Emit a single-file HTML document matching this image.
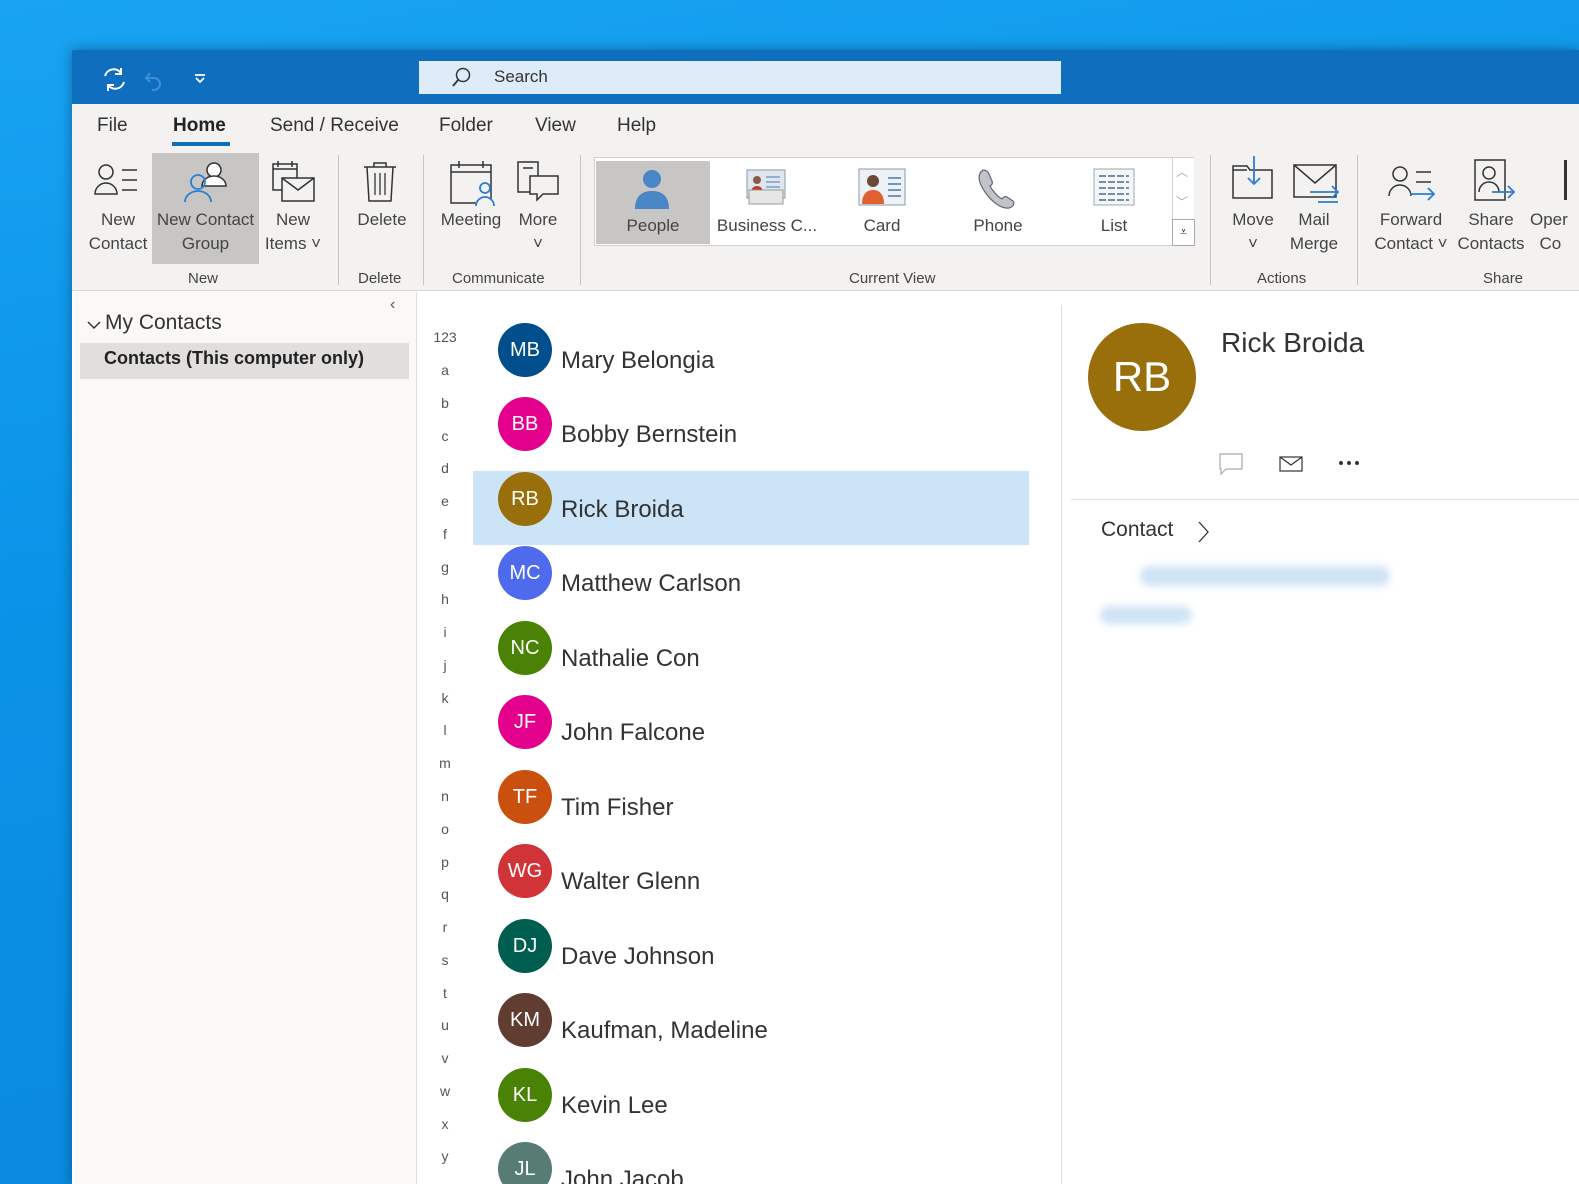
<!DOCTYPE html>
<html><head><meta charset="utf-8"><style>
*{margin:0;padding:0;box-sizing:border-box}
html,body{width:1579px;height:1184px;overflow:hidden}
body{position:relative;font-family:"Liberation Sans",sans-serif;background:linear-gradient(170deg,#19a3f2 0%,#0a93e8 40%,#0a86dc 100%)}
.a{position:absolute}
.win{left:72px;top:50px;width:1507px;height:1134px;background:#fff;box-shadow:0 0 12px rgba(0,0,0,.35)}
.title{left:72px;top:50px;width:1507px;height:54px;background:#106ebe}
.ribbon{left:72px;top:104px;width:1507px;height:187px;background:#f3f2f1;border-bottom:1px solid #d6d6d6}
.tab{top:115px;font-size:19px;color:#333}
.lbl{font-size:17px;color:#444;text-align:center;line-height:24px}
.grp{top:270px;font-size:15px;color:#444}
.sep{top:155px;width:1px;height:130px;background:#c8c6c4}
.av{width:54px;height:54px;border-radius:50%;color:#fff;font-size:20px;text-align:center;line-height:54px;left:498px}
.nm{left:561px;font-size:24px;color:#333}
.al{left:425px;width:40px;text-align:center;font-size:14px;color:#555}
</style></head><body>
<div class="a win"></div>
<div class="a title"></div>
<svg class="a" style="left:100px;top:65px" width="120" height="30" viewBox="0 0 120 30">
<path d="M5 11a9 9 0 0 1 16-3M24 17a9 9 0 0 1-16 3" stroke="#fff" stroke-width="2" fill="none"/><path d="M21 3v6h-6M8 26v-6h6" stroke="#fff" stroke-width="2" fill="none"/>
<path d="M50 8l-4 5 4 4M46 13h8a6 6 0 0 1 0 12h-2" stroke="#3f8fd6" stroke-width="2" fill="none"/>
<path d="M95 10h10M96 13l4 4 4-4" stroke="#fff" stroke-width="1.8" fill="none"/></svg>
<div class="a" style="left:419px;top:61px;width:642px;height:33px;background:#deecf9"></div>
<svg class="a" style="left:450px;top:66px" width="24" height="24"><circle cx="13" cy="9" r="6.5" stroke="#333" stroke-width="1.5" fill="none"/><path d="M8.5 13.5L3 20" stroke="#333" stroke-width="1.8"/></svg>
<div class="a" style="left:494px;top:67px;font-size:17px;color:#333">Search</div>
<div class="a ribbon"></div>
<div class="a tab" style="left:97px">File</div>
<div class="a tab" style="left:173px;font-weight:bold;color:#222">Home</div>
<div class="a" style="left:172px;top:142px;width:58px;height:4px;background:#106ebe"></div>
<div class="a tab" style="left:270px">Send / Receive</div>
<div class="a tab" style="left:439px">Folder</div>
<div class="a tab" style="left:535px">View</div>
<div class="a tab" style="left:617px">Help</div>
<div class="a" style="left:152px;top:153px;width:107px;height:111px;background:#c8c6c4"></div>
<svg class="a" style="left:92px;top:160px" width="52" height="40"><circle cx="14" cy="12" r="7" stroke="#333" stroke-width="1.5" fill="none"/><path d="M3 34a11 11 0 0 1 22 0z" stroke="#333" stroke-width="1.5" fill="none"/><path d="M30 10h15M30 20h15M30 30h15" stroke="#333" stroke-width="1.5"/></svg>
<div class="a lbl" style="left:80px;top:208px;width:76px">New<br>Contact</div>
<svg class="a" style="left:180px;top:158px" width="50" height="46"><circle cx="34" cy="12" r="7" stroke="#333" stroke-width="1.5" fill="#fff"/><path d="M22 28a12 10 0 0 1 24 0z" stroke="#333" stroke-width="1.5" fill="#fff"/><circle cx="18" cy="24" r="7" stroke="#2a7fd4" stroke-width="1.8" fill="none"/><path d="M5 44a13 11 0 0 1 26 0" stroke="#2a7fd4" stroke-width="1.8" fill="none"/></svg>
<div class="a lbl" style="left:152px;top:208px;width:107px">New Contact<br>Group</div>
<svg class="a" style="left:270px;top:160px" width="48" height="44"><rect x="3" y="4" width="24" height="26" stroke="#333" stroke-width="1.5" fill="none"/><path d="M3 9h24M8 1v6M22 1v6" stroke="#333" stroke-width="1.5"/><rect x="12" y="18" width="32" height="23" stroke="#333" stroke-width="1.5" fill="#f3f2f1"/><path d="M12 18l16 12 16-12" stroke="#333" stroke-width="1.5" fill="none"/></svg>
<div class="a lbl" style="left:256px;top:208px;width:74px">New<br>Items ˅</div>
<div class="a grp" style="left:188px">New</div>
<div class="a sep" style="left:338px"></div>
<svg class="a" style="left:362px;top:160px" width="36" height="44"><path d="M2 7h32M12 7V3h12v4" stroke="#333" stroke-width="1.5" fill="none"/><path d="M5 7l2 34h22l2-34" stroke="#333" stroke-width="1.5" fill="none"/><path d="M13 13v22M18 13v22M23 13v22" stroke="#333" stroke-width="1.3"/></svg>
<div class="a lbl" style="left:350px;top:208px;width:64px">Delete</div>
<div class="a grp" style="left:358px">Delete</div>
<div class="a sep" style="left:423px"></div>
<svg class="a" style="left:448px;top:160px" width="50" height="46"><rect x="3" y="5" width="40" height="38" stroke="#333" stroke-width="1.5" fill="none"/><path d="M3 12h40M11 1v7M35 1v7" stroke="#333" stroke-width="1.5"/><circle cx="37" cy="28" r="5" stroke="#2a7fd4" stroke-width="1.8" fill="#f3f2f1"/><path d="M28 46a9 9 0 0 1 18 0" stroke="#2a7fd4" stroke-width="1.8" fill="#f3f2f1"/></svg>
<div class="a lbl" style="left:436px;top:208px;width:70px">Meeting</div>
<svg class="a" style="left:515px;top:160px" width="46" height="46"><path d="M3 2h20v30H3z" stroke="#333" stroke-width="1.5" fill="none"/><path d="M8 8h10" stroke="#333" stroke-width="1.5"/><path d="M15 16h28v18H28l-6 6v-6h-7z" stroke="#333" stroke-width="1.5" fill="#f3f2f1"/></svg>
<div class="a lbl" style="left:510px;top:208px;width:56px">More<br>˅</div>
<div class="a grp" style="left:452px">Communicate</div>
<div class="a sep" style="left:580px"></div>
<div class="a" style="left:594px;top:157px;width:600px;height:89px;background:#fff;border:1px solid #d2d0ce"></div>
<div class="a" style="left:596px;top:161px;width:114px;height:83px;background:#c8c6c4"></div>
<svg class="a" style="left:632px;top:167px" width="40" height="44"><circle cx="20" cy="12" r="9" fill="#4a86c5"/><path d="M3 42c0-12 6-18 17-18s17 6 17 18z" fill="#4a86c5"/></svg>
<div class="a lbl" style="left:596px;top:214px;width:114px">People</div>
<svg class="a" style="left:743px;top:168px" width="46" height="40"><rect x="4" y="2" width="38" height="28" fill="#dfe6ee" stroke="#8a9aa8"/><circle cx="14" cy="12" r="4" fill="#8a5a4a"/><path d="M8 24a6 6 0 0 1 12 0z" fill="#c0392b"/><path d="M23 9h14M23 14h14M23 19h14" stroke="#4a78b0"/><rect x="6" y="22" width="34" height="14" fill="#e6e6e6" stroke="#999"/></svg>
<div class="a lbl" style="left:712px;top:214px;width:110px">Business C...</div>
<svg class="a" style="left:858px;top:168px" width="48" height="40"><rect x="1" y="1" width="46" height="36" fill="#eef2f6" stroke="#8a9aa8"/><circle cx="15" cy="13" r="6" fill="#6b4a3a"/><path d="M4 36c0-10 5-14 11-14s11 4 11 14z" fill="#e06030"/><path d="M30 10h13M30 16h13M30 22h13M30 28h13" stroke="#4a78b0" stroke-width="1.5"/></svg>
<div class="a lbl" style="left:850px;top:214px;width:64px">Card</div>
<svg class="a" style="left:975px;top:166px" width="46" height="46"><path d="M8 4c-6 4-5 12 2 22s16 17 24 16c4-1 6-4 4-7l-6-4c-2-1-4 0-5 2-4-2-10-9-12-13 2-1 3-3 2-5l-3-7c-1-3-4-4-6-4z" fill="#c0c4c8" stroke="#667" stroke-width="1.2"/></svg>
<div class="a lbl" style="left:964px;top:214px;width:68px">Phone</div>
<svg class="a" style="left:1093px;top:168px" width="42" height="40"><rect x="1" y="1" width="40" height="36" fill="#f4f6f8" stroke="#9aa"/><path d="M6 8h30M6 14h30M6 20h30M6 26h30M6 32h30" stroke="#6f8eb0" stroke-width="2" stroke-dasharray="7 2"/></svg>
<div class="a lbl" style="left:1084px;top:214px;width:60px">List</div>
<div class="a" style="left:1172px;top:158px;width:22px;height:88px;border-left:1px solid #d2d0ce;background:#fff"></div>
<div class="a" style="left:1172px;top:219px;width:23px;height:27px;border:1px solid #aaa;background:#fff;font-size:13px;text-align:center;line-height:24px;color:#333">⩡</div>
<div class="a" style="left:1176px;top:163px;font-size:12px;color:#aaa">︿</div>
<div class="a" style="left:1176px;top:193px;font-size:12px;color:#aaa">﹀</div>
<div class="a grp" style="left:849px">Current View</div>
<div class="a sep" style="left:1210px"></div>
<svg class="a" style="left:1230px;top:156px" width="46" height="46"><path d="M3 10h14l3 4h22v28H3z" stroke="#333" stroke-width="1.5" fill="none"/><path d="M3 14h14" stroke="#333" stroke-width="1.5"/><path d="M24 0v28M18 22l6 6 6-6" stroke="#2a7fd4" stroke-width="1.8" fill="none"/></svg>
<div class="a lbl" style="left:1222px;top:208px;width:62px">Move<br>˅</div>
<svg class="a" style="left:1292px;top:162px" width="48" height="44"><rect x="2" y="3" width="42" height="32" stroke="#333" stroke-width="1.5" fill="none"/><path d="M2 3l21 18L44 3" stroke="#333" stroke-width="1.5" fill="none"/><path d="M18 30h28M40 24l6 6-6 6M26 40h20" stroke="#2a7fd4" stroke-width="1.8" fill="none"/></svg>
<div class="a lbl" style="left:1282px;top:208px;width:64px">Mail<br>Merge</div>
<div class="a grp" style="left:1257px">Actions</div>
<div class="a sep" style="left:1357px"></div>
<svg class="a" style="left:1386px;top:162px" width="52" height="44"><circle cx="14" cy="12" r="7" stroke="#333" stroke-width="1.5" fill="none"/><path d="M3 34a11 11 0 0 1 22 0" stroke="#333" stroke-width="1.5" fill="none"/><path d="M30 10h15M30 20h15" stroke="#333" stroke-width="1.5"/><path d="M24 32h24M42 26l6 6-6 6" stroke="#2a7fd4" stroke-width="1.8" fill="none"/></svg>
<div class="a lbl" style="left:1368px;top:208px;width:86px">Forward<br>Contact ˅</div>
<svg class="a" style="left:1472px;top:158px" width="46" height="48"><rect x="3" y="2" width="30" height="40" stroke="#333" stroke-width="1.5" fill="none"/><circle cx="17" cy="15" r="6" stroke="#333" stroke-width="1.5" fill="none"/><path d="M7 34a10 10 0 0 1 20 0" stroke="#333" stroke-width="1.5" fill="none"/><path d="M20 34h22M36 28l6 6-6 6" stroke="#2a7fd4" stroke-width="1.8" fill="none"/></svg>
<div class="a lbl" style="left:1452px;top:208px;width:78px">Share<br>Contacts</div>
<div class="a" style="left:1564px;top:160px;width:3px;height:40px;background:#333"></div>
<div class="a lbl" style="left:1530px;top:208px;width:49px;text-align:left;overflow:hidden;white-space:nowrap">Oper<br>&nbsp;&nbsp;Co</div>
<div class="a grp" style="left:1483px">Share</div>
<div class="a" style="left:74px;top:292px;width:343px;height:892px;background:#faf9f8;border-right:1px solid #e1dfdd"></div>
<div class="a" style="left:390px;top:296px;font-size:16px;color:#555">‹</div>
<svg class="a" style="left:86px;top:318px" width="16" height="14"><path d="M2 4l6 6 6-6" stroke="#333" stroke-width="1.5" fill="none"/></svg>
<div class="a" style="left:105px;top:311px;font-size:21px;color:#333">My Contacts</div>
<div class="a" style="left:80px;top:343px;width:329px;height:36px;background:#e1dfdd"></div>
<div class="a" style="left:104px;top:348px;font-size:18px;font-weight:bold;color:#222">Contacts (This computer only)</div>
<div class="a al" style="top:329px">123</div>
<div class="a al" style="top:362px">a</div><div class="a al" style="top:395px">b</div><div class="a al" style="top:428px">c</div><div class="a al" style="top:460px">d</div><div class="a al" style="top:493px">e</div><div class="a al" style="top:526px">f</div><div class="a al" style="top:559px">g</div><div class="a al" style="top:591px">h</div><div class="a al" style="top:624px">i</div><div class="a al" style="top:657px">j</div><div class="a al" style="top:690px">k</div><div class="a al" style="top:722px">l</div><div class="a al" style="top:755px">m</div><div class="a al" style="top:788px">n</div><div class="a al" style="top:821px">o</div><div class="a al" style="top:854px">p</div><div class="a al" style="top:886px">q</div><div class="a al" style="top:919px">r</div><div class="a al" style="top:952px">s</div><div class="a al" style="top:985px">t</div><div class="a al" style="top:1017px">u</div><div class="a al" style="top:1050px">v</div><div class="a al" style="top:1083px">w</div><div class="a al" style="top:1116px">x</div><div class="a al" style="top:1148px">y</div>
<div class="a" style="left:473px;top:471px;width:556px;height:74px;background:#cce4f7"></div>
<div class="a av" style="top:323px;background:#004e8c">MB</div><div class="a nm" style="top:347px">Mary Belongia</div>
<div class="a av" style="top:397px;background:#e3008c">BB</div><div class="a nm" style="top:421px">Bobby Bernstein</div>
<div class="a av" style="top:472px;background:#986f0b">RB</div><div class="a nm" style="top:496px">Rick Broida</div>
<div class="a av" style="top:546px;background:#4f6bed">MC</div><div class="a nm" style="top:570px">Matthew Carlson</div>
<div class="a av" style="top:621px;background:#498205">NC</div><div class="a nm" style="top:645px">Nathalie Con</div>
<div class="a av" style="top:695px;background:#e3008c">JF</div><div class="a nm" style="top:719px">John Falcone</div>
<div class="a av" style="top:770px;background:#ca5010">TF</div><div class="a nm" style="top:794px">Tim Fisher</div>
<div class="a av" style="top:844px;background:#d13438">WG</div><div class="a nm" style="top:868px">Walter Glenn</div>
<div class="a av" style="top:919px;background:#005e50">DJ</div><div class="a nm" style="top:943px">Dave Johnson</div>
<div class="a av" style="top:993px;background:#603d30">KM</div><div class="a nm" style="top:1017px">Kaufman, Madeline</div>
<div class="a av" style="top:1068px;background:#498205">KL</div><div class="a nm" style="top:1092px">Kevin Lee</div>
<div class="a" style="left:480px;top:1140px;width:400px;height:44px;overflow:hidden">
<div class="a av" style="left:18px;top:2px;background:#567c73">JL</div><div class="a nm" style="left:81px;top:26px">John Jacob</div></div>
<div class="a" style="left:1061px;top:305px;width:1px;height:879px;background:#e1dfdd"></div>
<div class="a" style="left:1088px;top:323px;width:108px;height:108px;border-radius:50%;background:#986f0b;color:#fff;font-size:42px;text-align:center;line-height:108px">RB</div>
<div class="a" style="left:1221px;top:327px;font-size:28px;color:#333">Rick Broida</div>
<svg class="a" style="left:1218px;top:452px" width="160" height="26"><path d="M2 2h22v15H8l-5 5v-5H2z" stroke="#aaa" stroke-width="1.2" fill="none"/><rect x="62" y="5" width="22" height="14" stroke="#333" stroke-width="1.2" fill="none"/><path d="M62 5l11 8 11-8" stroke="#333" stroke-width="1.2" fill="none"/><circle cx="123" cy="11" r="2" fill="#333"/><circle cx="131" cy="11" r="2" fill="#333"/><circle cx="139" cy="11" r="2" fill="#333"/></svg>
<div class="a" style="left:1071px;top:499px;width:508px;height:1px;background:#e1dfdd"></div>
<div class="a" style="left:1101px;top:518px;font-size:21px;color:#333">Contact</div>
<svg class="a" style="left:1196px;top:520px" width="16" height="24"><path d="M3 2l9 10-9 10" stroke="#333" stroke-width="1.3" fill="none"/></svg>
<div class="a" style="left:1140px;top:566px;width:250px;height:20px;border-radius:10px;background:#cfe3f6;filter:blur(4px)"></div>
<div class="a" style="left:1100px;top:606px;width:92px;height:18px;border-radius:9px;background:#cfe3f6;filter:blur(4px)"></div>
</body></html>
